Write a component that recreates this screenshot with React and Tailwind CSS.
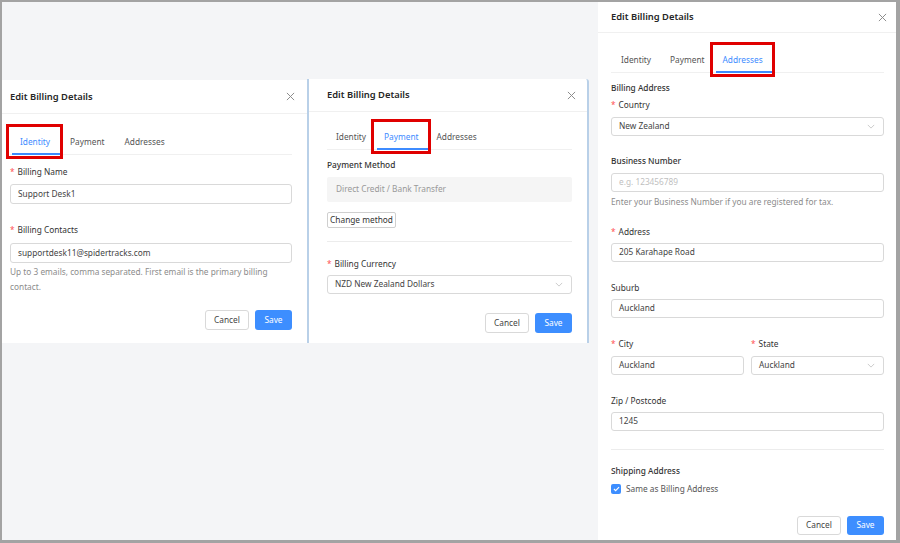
import React from "react";

function CloseX() {
  return (
    <svg width="9" height="9" viewBox="0 0 10 10" className="shrink-0">
      <path d="M1 1 L9 9 M9 1 L1 9" stroke="#8c8c8c" strokeWidth="1.1" fill="none" />
    </svg>
  );
}

function Chevron() {
  return (
    <svg width="8" height="5" viewBox="0 0 10 6" className="shrink-0">
      <path d="M1 1 L5 5 L9 1" stroke="#bfbfbf" strokeWidth="1" fill="none" />
    </svg>
  );
}

function Header({ className }) {
  return (
    <div className={`flex items-center justify-between border-b border-[#f0f0f0] ${className}`}>
      <span className="text-[9.4px] font-semibold text-[#262626] leading-[14px]">Edit Billing Details</span>
      <CloseX />
    </div>
  );
}

function Tabs({ active, className, firstPad = "px-[10px]", pad = "px-[10px]" }) {
  const tabs = ["Identity", "Payment", "Addresses"];
  return (
    <div className={`flex border-b border-[#f0f0f0] ${className}`}>
      {tabs.map((t, i) => (
        <div
          key={t}
          className={`relative h-[28px] pt-[3px] flex items-center ${i === 0 ? firstPad : pad} text-[8.3px] leading-[14px] ${
            t === active ? "text-[#3d8bff]" : "text-[#555]"
          }`}
        >
          {t}
          {t === active && (
            <>
              <div className="absolute left-[2px] right-0 bottom-[-1px] h-[2px] bg-[#3d8bff]" />
              <div className="absolute left-[-4px] right-[-3px] top-[-2px] bottom-[-5px] border-[3px] border-[#e00000]" />
            </>
          )}
        </div>
      ))}
    </div>
  );
}

function Label({ children, required, className = "", medium }) {
  return (
    <div className={`text-[8.3px] leading-[14px] text-[#333] ${medium ? "font-medium" : ""} ${className}`}>
      {required && <span className="text-[#ff4d4f] mr-[3px]">*</span>}
      {children}
    </div>
  );
}

function Box({ children, className = "", select, placeholder }) {
  return (
    <div
      className={`flex items-center justify-between border border-[#d9d9d9] rounded-[3px] bg-white pl-[7px] pr-[8px] text-[8.3px] ${
        placeholder ? "text-[#bfbfbf]" : "text-[#444]"
      } ${className}`}
    >
      <span>{children}</span>
      {select && <Chevron />}
    </div>
  );
}

function Buttons({ className = "", h = "h-[20px]" }) {
  return (
    <div className={`flex justify-end gap-[6px] ${className}`}>
      <div className={`${h} w-[44px] flex items-center justify-center border border-[#d9d9d9] rounded-[3px] bg-white text-[8.3px] text-[#444]`}>
        Cancel
      </div>
      <div className={`${h} w-[37px] flex items-center justify-center rounded-[3px] bg-[#3d8eff] text-[8.3px] text-white`}>
        Save
      </div>
    </div>
  );
}

function LeftPanel() {
  return (
    <div className="mt-[78px] w-[305px] h-[263px] bg-white shrink-0 flex flex-col">
      <Header className="h-[34px] pl-[8px] pr-[12px]" />
      <div className="pl-[8px] pr-[15px] flex flex-col">
        <Tabs active="Identity" className="mt-[12px]" />
        <Label required className="mt-[10px]">Billing Name</Label>
        <Box className="mt-[5px] h-[20px]">Support Desk1</Box>
        <Label required className="mt-[19px]">Billing Contacts</Label>
        <Box className="mt-[6px] h-[20px]">supportdesk11@spidertracks.com</Box>
        <div className="mt-[1px] text-[8.3px] leading-[15px] text-[#8c8c8c]">
          Up to 3 emails, comma separated. First email is the primary billing
          <br />
          contact.
        </div>
        <Buttons className="mt-[16px]" />
      </div>
    </div>
  );
}

function MiddlePanel() {
  return (
    <div className="mt-[77px] w-[282px] h-[264px] bg-white shrink-0 flex flex-col border-l-2 border-r-2 border-[#b9d0e8] rounded-tr-[3px]">
      <Header className="h-[33px] pl-[18px] pr-[11px]" />
      <div className="pl-[18px] pr-[15px] flex flex-col">
        <Tabs active="Payment" className="mt-[9px]" firstPad="pl-[9px] pr-[9px]" pad="px-[9px]" />
        <Label medium className="mt-[8px]">Payment Method</Label>
        <div className="mt-[5px] h-[25px] bg-[#f5f5f5] rounded-[2px] flex items-center pl-[9px] text-[8.3px] text-[#999]">
          Direct Credit / Bank Transfer
        </div>
        <div className="mt-[10px] self-start h-[16px] w-[69px] flex items-center justify-center border border-[#cfcfcf] rounded-[2px] text-[8.3px] text-[#333]">
          Change method
        </div>
        <div className="mt-[13px] border-t border-[#ececec]" />
        <Label required className="mt-[15px]">Billing Currency</Label>
        <Box select className="mt-[4px] h-[19px]">NZD New Zealand Dollars</Box>
        <Buttons className="mt-[19px]" />
      </div>
    </div>
  );
}

function RightPanel() {
  return (
    <div className="ml-[9px] w-[298px] h-[538px] bg-white shrink-0 flex flex-col">
      <Header className="h-[31px] pl-[13px] pr-[9px]" />
      <div className="pl-[13px] pr-[12px] flex flex-col">
        <Tabs active="Addresses" className="mt-[11px]" pad="px-[9px]" />
        <Label medium className="mt-[8px]">Billing Address</Label>
        <Label required className="mt-[3px]">Country</Label>
        <Box select className="mt-[5px] h-[19px]">New Zealand</Box>
        <Label medium className="mt-[18px]">Business Number</Label>
        <Box placeholder className="mt-[5px] h-[19px]">e.g. 123456789</Box>
        <div className="mt-[3px] text-[8.3px] leading-[14px] text-[#8c8c8c]">
          Enter your Business Number if you are registered for tax.
        </div>
        <Label required className="mt-[16px]">Address</Label>
        <Box className="mt-[4px] h-[19px]">205 Karahape Road</Box>
        <Label className="mt-[19px]">Suburb</Label>
        <Box className="mt-[4px] h-[19px]">Auckland</Box>
        <div className="mt-[19px] grid grid-cols-2 gap-x-[7px]">
          <div className="flex flex-col">
            <Label required>City</Label>
            <Box className="mt-[5px] h-[19px]">Auckland</Box>
          </div>
          <div className="flex flex-col">
            <Label required>State</Label>
            <Box select className="mt-[5px] h-[19px]">Auckland</Box>
          </div>
        </div>
        <Label className="mt-[19px]">Zip / Postcode</Label>
        <Box className="mt-[4px] h-[19px]">1245</Box>
        <div className="mt-[18px] border-t border-[#ececec]" />
        <Label medium className="mt-[14px]">Shipping Address</Label>
        <div className="mt-[4px] flex items-center gap-[5px] h-[14px]">
          <div className="w-[10px] h-[10px] rounded-[2px] bg-[#3d8eff] flex items-center justify-center">
            <svg width="7" height="6" viewBox="0 0 8 7">
              <path d="M1 3.5 L3 5.5 L7 1.2" stroke="white" strokeWidth="1.3" fill="none" />
            </svg>
          </div>
          <span className="text-[8.3px] text-[#555]">Same as Billing Address</span>
        </div>
        <Buttons className="mt-[20px]" h="h-[19px]" />
      </div>
    </div>
  );
}

export default function App() {
  return (
    <div className="w-[900px] h-[543px] overflow-hidden border-t-2 border-l-2 border-r-4 border-b-[3px] border-[#a3a3a3] bg-[#f4f5f7] flex items-start font-['Noto_Sans',sans-serif]">
      <LeftPanel />
      <MiddlePanel />
      <RightPanel />
    </div>
  );
}
